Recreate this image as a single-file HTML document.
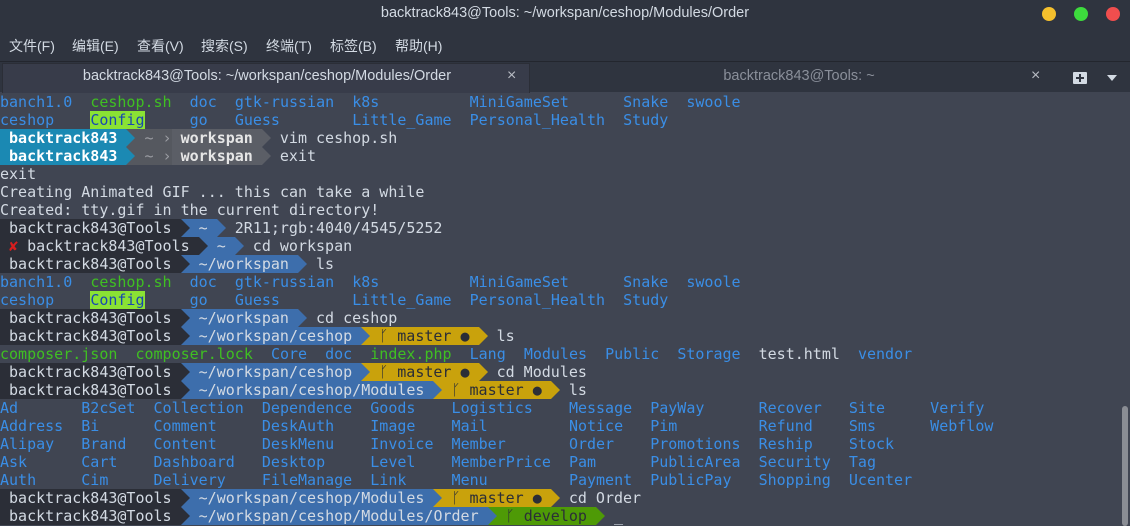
<!DOCTYPE html>
<html><head><meta charset="utf-8"><style>
*{margin:0;padding:0;box-sizing:border-box}
body{width:1130px;height:526px;background:#404552;overflow:hidden;position:relative;font-family:"Liberation Sans","Noto Sans CJK SC",sans-serif}
#title{position:absolute;left:0;top:0;width:1130px;height:62px;background:#2f343f}
.t{position:absolute;color:#d3dae3;font-size:14.5px}
.m{position:absolute;top:36px;color:#d3dae3;font-size:14px}
.dot{position:absolute;top:7px;width:14px;height:14px;border-radius:7px}
#tabs{position:absolute;left:0;top:61px;width:1130px;height:31px;background:#2f343f;border-top:1px solid #23262e}
#tab1{position:absolute;left:2px;top:1px;width:528px;height:30px;background:#383c4a;border:1px solid #2b2e37;border-bottom:none}
.term{position:absolute;left:0;font-family:"DejaVu Sans Mono","Liberation Mono",monospace;font-size:15px;line-height:18px;height:18px;white-space:pre;color:#d3dae3}
.b{color:#3a8ee6}.g{color:#3fbf22}.w{color:#d3dae3}
.cf{background:#8ae234;color:#1848b0}
.dk{background:#2b2e37}.bl{background:#3d6eac}.yl{background:#c9a20c;color:#2b2e37}.gr{background:#4e9a06;color:#2b2e37}
.tl{background:#1b89b3;font-weight:bold;color:#fff}.g1{background:#55585f;color:#9a9ca2}.g2{background:#5b5e66;font-weight:bold;color:#e6e6e6}
.ar{display:inline-block;width:9px;height:18px;vertical-align:top;position:relative}
.ar:before{content:"";position:absolute;left:0;top:0;border-left:9px solid var(--c);border-top:9px solid transparent;border-bottom:9px solid transparent}
.bl .nb{color:#c8cdd6}
</style></head><body>
<div id="title">
<div class="t" style="left:0;width:1130px;text-align:center;top:5px">backtrack843@Tools: ~/workspan/ceshop/Modules/Order</div>
<div class="dot" style="left:1042px;background:#f5c02d"></div>
<div class="dot" style="left:1074px;background:#3ddb3d"></div>
<div class="dot" style="left:1106px;background:#f04e4e"></div>
<div class="m" style="left:9px">文件(F)</div><div class="m" style="left:72px">编辑(E)</div><div class="m" style="left:137px">查看(V)</div><div class="m" style="left:201px">搜索(S)</div><div class="m" style="left:266px">终端(T)</div><div class="m" style="left:330px">标签(B)</div><div class="m" style="left:395px">帮助(H)</div>
</div>
<div id="tabs">
<div id="tab1"></div>
<div class="t" style="left:0;width:534px;text-align:center;top:6px">backtrack843@Tools: ~/workspan/ceshop/Modules/Order</div>
<div class="t" style="left:507px;top:5px;font-size:16px;color:#b8bcc4">×</div>
<div class="t" style="left:532px;width:534px;text-align:center;top:6px;color:#8a8f9a">backtrack843@Tools: ~</div>
<div class="t" style="left:1031px;top:5px;font-size:16px;color:#b8bcc4">×</div>
<div style="position:absolute;left:1073px;top:10px;width:14px;height:12px;background:#d3dae3;border-radius:1px"><div style="position:absolute;left:3px;top:5px;width:8px;height:2px;background:#2f343f"></div><div style="position:absolute;left:6px;top:2px;width:2px;height:8px;background:#2f343f"></div></div>
<div style="position:absolute;left:1107px;top:13px;border-left:5px solid transparent;border-right:5px solid transparent;border-top:6px solid #d3dae3"></div>
</div>
<div style="position:absolute;left:1122px;top:406px;width:6px;height:120px;background:#8a8d94;border-radius:3px"></div>

<div class="term" style="top:93px"><span class="b">banch1.0</span>  <span class="g">ceshop.sh</span>  <span class="b">doc</span>  <span class="b">gtk-russian</span>  <span class="b">k8s</span>          <span class="b">MiniGameSet</span>      <span class="b">Snake</span>  <span class="b">swoole</span></div>
<div class="term" style="top:111px"><span class="b">ceshop</span>    <span class="cf">Config</span>     <span class="b">go</span>   <span class="b">Guess</span>        <span class="b">Little_Game</span>  <span class="b">Personal_Health</span>  <span class="b">Study</span></div>
<div class="term" style="top:129px"><span class="tl"> backtrack843 </span><span class="ar g1" style="--c:#1b89b3"></span><span class="g1"> ~ ›</span><span class="g2"> workspan </span><span class="ar" style="--c:#5b5e66"></span> vim ceshop.sh</div>
<div class="term" style="top:147px"><span class="tl"> backtrack843 </span><span class="ar g1" style="--c:#1b89b3"></span><span class="g1"> ~ ›</span><span class="g2"> workspan </span><span class="ar" style="--c:#5b5e66"></span> exit</div>
<div class="term" style="top:165px">exit</div>
<div class="term" style="top:183px">Creating Animated GIF ... this can take a while</div>
<div class="term" style="top:201px">Created: tty.gif in the current directory!</div>
<div class="term" style="top:219px"><span class="dk"> backtrack843@Tools </span><span class="ar bl" style="--c:#2b2e37"></span><span class="bl nb"> ~ </span><span class="ar" style="--c:#3d6eac"></span> 2R11;rgb:4040/4545/5252</div>
<div class="term" style="top:237px"><span class="dk"> <span style="color:#d81e1e">✘</span> backtrack843@Tools </span><span class="ar bl" style="--c:#2b2e37"></span><span class="bl nb"> ~ </span><span class="ar" style="--c:#3d6eac"></span> cd workspan</div>
<div class="term" style="top:255px"><span class="dk"> backtrack843@Tools </span><span class="ar bl" style="--c:#2b2e37"></span><span class="bl nb"> ~/workspan </span><span class="ar" style="--c:#3d6eac"></span> ls</div>
<div class="term" style="top:273px"><span class="b">banch1.0</span>  <span class="g">ceshop.sh</span>  <span class="b">doc</span>  <span class="b">gtk-russian</span>  <span class="b">k8s</span>          <span class="b">MiniGameSet</span>      <span class="b">Snake</span>  <span class="b">swoole</span></div>
<div class="term" style="top:291px"><span class="b">ceshop</span>    <span class="cf">Config</span>     <span class="b">go</span>   <span class="b">Guess</span>        <span class="b">Little_Game</span>  <span class="b">Personal_Health</span>  <span class="b">Study</span></div>
<div class="term" style="top:309px"><span class="dk"> backtrack843@Tools </span><span class="ar bl" style="--c:#2b2e37"></span><span class="bl nb"> ~/workspan </span><span class="ar" style="--c:#3d6eac"></span> cd ceshop</div>
<div class="term" style="top:327px"><span class="dk"> backtrack843@Tools </span><span class="ar bl" style="--c:#2b2e37"></span><span class="bl nb"> ~/workspan/ceshop </span><span class="ar yl" style="--c:#3d6eac"></span><span class="yl"> ᚴ master ● </span><span class="ar" style="--c:#c9a20c"></span> ls</div>
<div class="term" style="top:345px"><span class="g">composer.json</span>  <span class="g">composer.lock</span>  <span class="b">Core</span>  <span class="b">doc</span>  <span class="g">index.php</span>  <span class="b">Lang</span>  <span class="b">Modules</span>  <span class="b">Public</span>  <span class="b">Storage</span>  test.html  <span class="b">vendor</span></div>
<div class="term" style="top:363px"><span class="dk"> backtrack843@Tools </span><span class="ar bl" style="--c:#2b2e37"></span><span class="bl nb"> ~/workspan/ceshop </span><span class="ar yl" style="--c:#3d6eac"></span><span class="yl"> ᚴ master ● </span><span class="ar" style="--c:#c9a20c"></span> cd Modules</div>
<div class="term" style="top:381px"><span class="dk"> backtrack843@Tools </span><span class="ar bl" style="--c:#2b2e37"></span><span class="bl nb"> ~/workspan/ceshop/Modules </span><span class="ar yl" style="--c:#3d6eac"></span><span class="yl"> ᚴ master ● </span><span class="ar" style="--c:#c9a20c"></span> ls</div>
<div class="term b" style="top:399px">Ad       B2cSet  Collection  Dependence  Goods    Logistics    Message  PayWay      Recover   Site     Verify</div>
<div class="term b" style="top:417px">Address  Bi      Comment     DeskAuth    Image    Mail         Notice   Pim         Refund    Sms      Webflow</div>
<div class="term b" style="top:435px">Alipay   Brand   Content     DeskMenu    Invoice  Member       Order    Promotions  Reship    Stock</div>
<div class="term b" style="top:453px">Ask      Cart    Dashboard   Desktop     Level    MemberPrice  Pam      PublicArea  Security  Tag</div>
<div class="term b" style="top:471px">Auth     Cim     Delivery    FileManage  Link     Menu         Payment  PublicPay   Shopping  Ucenter</div>
<div class="term" style="top:489px"><span class="dk"> backtrack843@Tools </span><span class="ar bl" style="--c:#2b2e37"></span><span class="bl nb"> ~/workspan/ceshop/Modules </span><span class="ar yl" style="--c:#3d6eac"></span><span class="yl"> ᚴ master ● </span><span class="ar" style="--c:#c9a20c"></span> cd Order</div>
<div class="term" style="top:507px"><span class="dk"> backtrack843@Tools </span><span class="ar bl" style="--c:#2b2e37"></span><span class="bl nb"> ~/workspan/ceshop/Modules/Order </span><span class="ar gr" style="--c:#3d6eac"></span><span class="gr"> ᚴ develop </span><span class="ar" style="--c:#4e9a06"></span> _</div>
</body></html>
